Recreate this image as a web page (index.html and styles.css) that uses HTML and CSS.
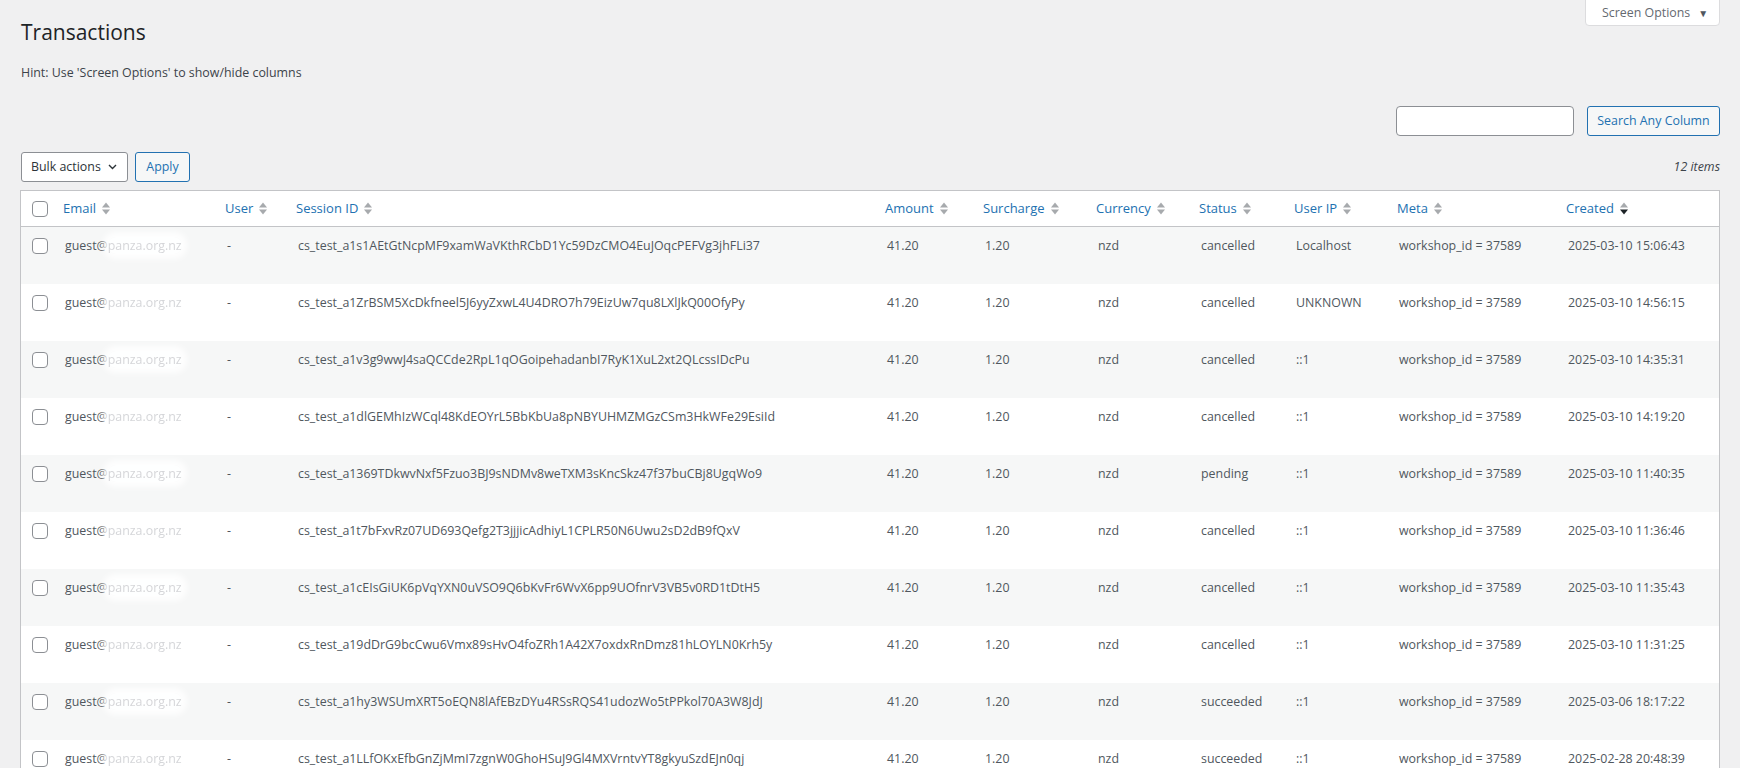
FILE: index.html
```html
<!DOCTYPE html>
<html lang="en">
<head>
    <meta charset="UTF-8">
    <meta name="viewport" content="width=device-width, initial-scale=1.0">
    <title>Transactions</title>
    <link rel="stylesheet" href="styles.css">
</head>
<body>
    <div class="wrap">
        <div class="page-head">
            <h1>Transactions</h1>
            <button class="screen-options">Screen Options <span class="caret">&#9660;</span></button>
        </div>

        <p class="hint">Hint: Use 'Screen Options' to show/hide columns</p>

        <div class="search-box">
            <input type="search" class="search-input">
            <button class="button">Search Any Column</button>
        </div>

        <div class="tablenav">
            <div class="bulk">
                <div class="select-box">
                    <span>Bulk actions</span>
                    <svg width="9" height="6" viewBox="0 0 9 6"><path d="M1 1l3.5 3.5L8 1" fill="none" stroke="#2c3338" stroke-width="1.4"/></svg>
                </div>
                <button class="button">Apply</button>
            </div>
            <span class="count">12 items</span>
        </div>

        <table class="list-table">
            <colgroup>
                <col class="col-check">
                <col class="col-email">
                <col class="col-user">
                <col class="col-session">
                <col class="col-amount">
                <col class="col-surcharge">
                <col class="col-currency">
                <col class="col-status">
                <col class="col-ip">
                <col class="col-meta">
                <col class="col-created">
            </colgroup>
            <thead>
                <tr>
                    <th class="check"><input type="checkbox"></th>
                    <th><a href="#">Email</a></th>
                    <th><a href="#">User</a></th>
                    <th><a href="#">Session ID</a></th>
                    <th><a href="#">Amount</a></th>
                    <th><a href="#">Surcharge</a></th>
                    <th><a href="#">Currency</a></th>
                    <th><a href="#">Status</a></th>
                    <th><a href="#">User IP</a></th>
                    <th><a href="#">Meta</a></th>
                    <th class="sorted-desc"><a href="#">Created</a></th>
                </tr>
            </thead>
            <tbody class="rows"></tbody>
        </table>
    </div>

    <script>
        // sort arrows for every header link
        document.querySelectorAll('thead th a').forEach(link => {
            link.insertAdjacentHTML('beforeend',
                '<svg class="sort" width="10" height="15" viewBox="0 0 10 15">' +
                '<path class="up" d="M1 6.5L5 1.5L9 6.5Z"/>' +
                '<path class="down" d="M1 8.5L9 8.5L5 13.5Z"/></svg>');
        });

        const transactions = [
            ['cs_test_a1s1AEtGtNcpMF9xamWaVKthRCbD1Yc59DzCMO4EuJOqcPEFVg3jhFLi37', 'cancelled', 'Localhost', '2025-03-10 15:06:43'],
            ['cs_test_a1ZrBSM5XcDkfneel5J6yyZxwL4U4DRO7h79EizUw7qu8LXlJkQ00OfyPy', 'cancelled', 'UNKNOWN', '2025-03-10 14:56:15'],
            ['cs_test_a1v3g9wwJ4saQCCde2RpL1qOGoipehadanbI7RyK1XuL2xt2QLcssIDcPu', 'cancelled', '::1', '2025-03-10 14:35:31'],
            ['cs_test_a1dlGEMhIzWCql48KdEOYrL5BbKbUa8pNBYUHMZMGzCSm3HkWFe29EsiId', 'cancelled', '::1', '2025-03-10 14:19:20'],
            ['cs_test_a1369TDkwvNxf5Fzuo3BJ9sNDMv8weTXM3sKncSkz47f37buCBj8UgqWo9', 'pending', '::1', '2025-03-10 11:40:35'],
            ['cs_test_a1t7bFxvRz07UD693Qefg2T3jjjicAdhiyL1CPLR50N6Uwu2sD2dB9fQxV', 'cancelled', '::1', '2025-03-10 11:36:46'],
            ['cs_test_a1cEIsGiUK6pVqYXN0uVSO9Q6bKvFr6WvX6pp9UOfnrV3VB5v0RD1tDtH5', 'cancelled', '::1', '2025-03-10 11:35:43'],
            ['cs_test_a19dDrG9bcCwu6Vmx89sHvO4foZRh1A42X7oxdxRnDmz81hLOYLN0Krh5y', 'cancelled', '::1', '2025-03-10 11:31:25'],
            ['cs_test_a1hy3WSUmXRT5oEQN8lAfEBzDYu4RSsRQS41udozWo5tPPkol70A3W8JdJ', 'succeeded', '::1', '2025-03-06 18:17:22'],
            ['cs_test_a1LLfOKxEfbGnZjMmI7zgnW0GhoHSuJ9Gl4MXVrntvYT8gkyuSzdEJn0qj', 'succeeded', '::1', '2025-02-28 20:48:39']
        ];

        const tbody = document.querySelector('.rows');
        transactions.forEach(([session, status, ip, created]) => {
            const tr = document.createElement('tr');
            tr.innerHTML =
                '<td class="check"><input type="checkbox"></td>' +
                '<td>guest@<span class="redacted">panza.org.nz</span></td>' +
                '<td>-</td>' +
                `<td>${session}</td>` +
                '<td>41.20</td><td>1.20</td><td>nzd</td>' +
                `<td>${status}</td><td>${ip}</td>` +
                '<td>workshop_id = 37589</td>' +
                `<td>${created}</td>`;
            tbody.appendChild(tr);
        });
    </script>
</body>
</html>
```

FILE: styles.css
```css
body {
    margin: 0;
    background: #f0f0f1;
    color: #3c434a;
    font-family: "Open Sans", "Noto Sans", sans-serif;
    font-size: 12.4px;
    line-height: 1.4;
}

.wrap {
    padding: 0 20px;
}

.page-head {
    display: flex;
    justify-content: space-between;
    align-items: flex-start;
}

h1 {
    margin: 0;
    padding: 17px 0 0 1px;
    font-size: 21px;
    font-weight: 400;
    line-height: 30px;
    color: #1d2327;
}

.screen-options {
    width: 135px;
    height: 27px;
    margin-top: -1px;
    padding: 0 0 0 16px;
    display: flex;
    align-items: center;
    gap: 8px;
    background: #fff;
    border: 1px solid #dcdcde;
    border-radius: 0 0 4px 4px;
    color: #646970;
    font: inherit;
    white-space: nowrap;
    cursor: pointer;
}

.caret {
    font-size: 10px;
    color: #50575e;
}

.hint {
    margin: 16px 0 0 1px;
    line-height: 20px;
    color: #3c434a;
}

.search-box {
    display: flex;
    justify-content: flex-end;
    gap: 13px;
    margin-top: 23px;
}

.search-input {
    width: 178px;
    height: 30px;
    box-sizing: border-box;
    border: 1px solid #8c8f94;
    border-radius: 4px;
    background: #fff;
}

.button {
    height: 30px;
    padding: 0 10px;
    border: 1px solid #2271b1;
    border-radius: 3px;
    background: #f6f7f7;
    color: #2271b1;
    font: inherit;
    white-space: nowrap;
    cursor: pointer;
}

.search-box .button {
    width: 133px;
    padding: 0 4px;
}

.tablenav {
    display: flex;
    justify-content: space-between;
    align-items: center;
    margin-top: 16px;
    height: 30px;
}

.bulk {
    display: flex;
    gap: 7px;
    padding-left: 1px;
}

.bulk .button {
    width: 55px;
}

.select-box {
    width: 107px;
    height: 30px;
    box-sizing: border-box;
    display: flex;
    align-items: center;
    justify-content: space-between;
    padding: 0 10px 0 9px;
    border: 1px solid #8c8f94;
    border-radius: 3px;
    background: #fff;
    color: #2c3338;
}

.count {
    font-style: italic;
    color: #3c434a;
}

.list-table {
    width: 100%;
    margin-top: 8px;
    table-layout: fixed;
    border-spacing: 0;
    border: 1px solid #c3c4c7;
    background: #fff;
}

.col-check { width: 34px; }
.col-email { width: 162px; }
.col-user { width: 71px; }
.col-session { width: 589px; }
.col-amount { width: 98px; }
.col-surcharge { width: 113px; }
.col-currency { width: 103px; }
.col-status { width: 95px; }
.col-ip { width: 103px; }
.col-meta { width: 169px; }
.col-created { width: 161px; }

thead th {
    padding: 0;
    text-align: left;
    font-weight: 400;
    border-bottom: 1px solid #c3c4c7;
}

thead th a {
    display: flex;
    align-items: center;
    gap: 5px;
    padding: 8px;
    line-height: 19px;
    color: #2271b1;
    text-decoration: none;
    font-size: 13px;
}

.sort path {
    fill: #a7aaad;
}

.sorted-desc .sort .down {
    fill: #1d2327;
}

tbody tr {
    height: 57px;
}

tbody tr:nth-child(odd) {
    background: #f6f7f7;
}

tbody td {
    padding: 9px 10px;
    vertical-align: top;
    line-height: 20px;
    color: #50575e;
    white-space: nowrap;
    overflow: hidden;
}

th.check,
td.check {
    padding: 10px 0 0 11px;
    vertical-align: top;
}

td.check {
    padding-top: 11px;
}

input[type="checkbox"] {
    appearance: none;
    display: block;
    width: 16px;
    height: 16px;
    margin: 0;
    border: 1px solid #8c8f94;
    border-radius: 4px;
    background: #fff;
}

.redacted {
    color: #d5d6d9;
    filter: blur(0.7px);
    background: rgba(255, 255, 255, 0.9);
    border-radius: 8px;
    box-shadow: 0 0 6px 5px rgba(255, 255, 255, 0.9);
}
```
